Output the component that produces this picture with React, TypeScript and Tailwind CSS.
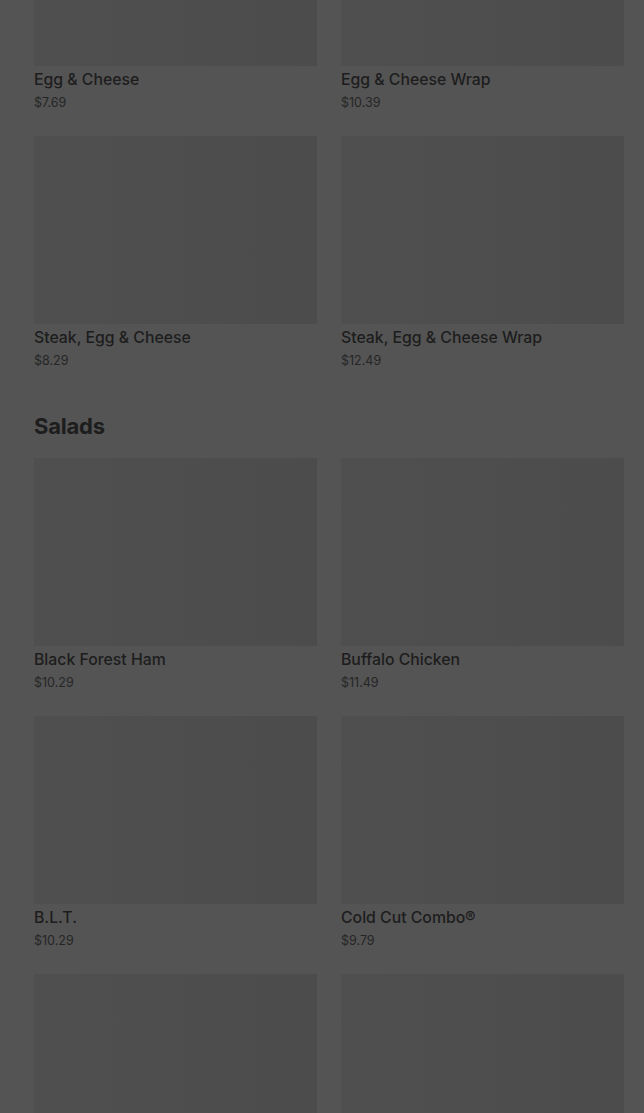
type Item = { name: string; price: string };

const sections: { title: string; items: Item[] }[] = [
  {
    title: "",
    items: [
      { name: "Egg & Cheese", price: "$7.69" },
      { name: "Egg & Cheese Wrap", price: "$10.39" },
      { name: "Steak, Egg & Cheese", price: "$8.29" },
      { name: "Steak, Egg & Cheese Wrap", price: "$12.49" },
    ],
  },
  {
    title: "Salads",
    items: [
      { name: "Black Forest Ham", price: "$10.29" },
      { name: "Buffalo Chicken", price: "$11.49" },
      { name: "B.L.T.", price: "$10.29" },
      { name: "Cold Cut Combo®", price: "$9.79" },
      // next row is only partly in view: the images show, the labels sit below the fold
      { name: "", price: "" },
      { name: "", price: "" },
    ],
  },
];

function ItemCard({ name, price }: Item) {
  return (
    <div className="flex flex-col">
      <div className="h-[188px] w-full bg-gradient-to-r from-[#4f4f4f] to-[#4c4c4c]" />
      {name ? (
        <>
          <p className="mt-[4px] text-[15.8px] font-medium leading-5 text-[#1d1d1d]">{name}</p>
          <p className="mt-[5px] text-[12.5px] leading-4 text-[#262626]">{price}</p>
        </>
      ) : null}
    </div>
  );
}

export default function App() {
  return (
    <div
      className="h-[1113px] w-full overflow-hidden bg-[#545454]"
      style={{ fontFamily: "Inter, 'Noto Sans', sans-serif" }}
    >
      <div className="-mt-[122px] pl-[34px] pr-[20px]">
        {sections.map((section, i) => (
          <section key={i} className={i > 0 ? "mt-[43px]" : ""}>
            {section.title ? (
              <h2 className="mb-[18px] text-[22px] font-bold leading-7 tracking-[-0.2px] text-[#1d1d1d]">
                {section.title}
              </h2>
            ) : null}
            <div className="grid grid-cols-2 gap-x-6 gap-y-[25px]">
              {section.items.map((item, j) => (
                <ItemCard key={j} name={item.name} price={item.price} />
              ))}
            </div>
          </section>
        ))}
      </div>
    </div>
  );
}
